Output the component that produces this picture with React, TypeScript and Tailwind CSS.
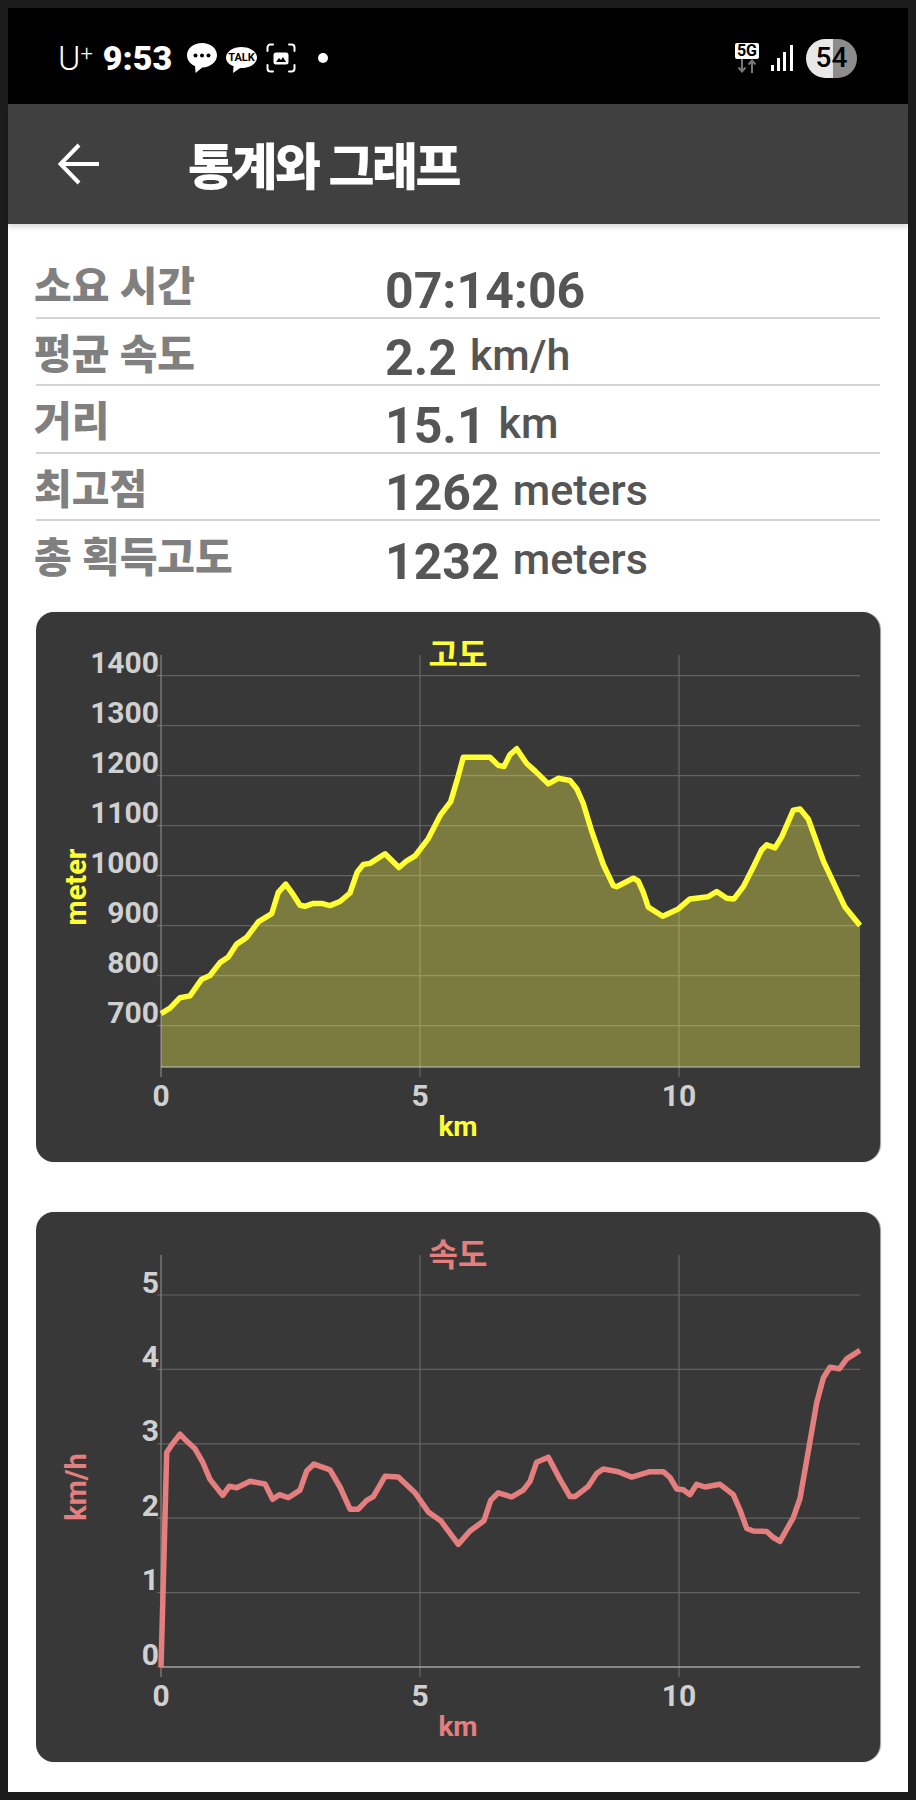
const toPage = (pts: number[][], ox: number, oy: number, sy: number) =>
  pts.map(([x, y]) => [ox + x / 3, oy + y / sy])

// traced from the track, page px
const elevationLine = [
  ...toPage(
    [[423,1118],[450,1103],[480,1075],[510,1070],[545,1025],[570,1015],[600,980],[625,965],[650,930],[680,912],[715,870],[755,848],[775,790],[797,768],[815,790],[840,825],[855,828],[880,820],[905,820],[930,826],[960,815],[990,792],[1012,735],[1030,715],[1050,712],[1095,686],[1137,723],[1160,705],[1185,692],[1225,645],[1262,580],[1292,545],[1312,485],[1330,425]],
    20, 600, 2.703,
  ),
  ...toPage(
    [[10,425],[90,425],[115,447],[132,450],[150,418],[170,402],[200,442],[225,462],[265,497],[295,482],[330,488],[350,510],[370,550],[395,625],[430,715],[460,772],[470,775],[520,752],[535,760],[550,790],[565,830],[608,855],[655,835],[690,808],[745,802],[770,788],[800,806],[822,808],[850,775],[880,722],[905,675],[920,662],[945,670],[965,640],[1000,568],[1020,565],[1045,592],[1090,705],[1155,830],[1200,880]],
    460, 600, 2.703,
  ),
].map(([x, y]) => [x - 36, y - 612])

const speedLine = [
  ...toPage(
    [[423,1221],[430,1000],[436,800],[440,660],[455,640],[480,612],[500,630],[525,650],[548,685],[570,730],[608,772],[628,748],[650,752],[690,735],[735,742],[758,782],[778,770],[805,778],[840,758],[860,708],[882,690],[930,705],[960,750],[990,808],[1015,808],[1040,785],[1060,775],[1095,722],[1135,724],[1185,765],[1225,815],[1262,838],[1315,900]],
    20, 1200, 2.613,
  ),
  ...toPage(
    [[30,865],[72,838],[92,785],[115,765],[155,776],[190,758],[210,735],[230,685],[265,672],[300,730],[330,775],[345,775],[385,748],[410,715],[430,703],[475,710],[515,724],[570,710],[610,710],[630,725],[650,755],[670,757],[690,770],[710,743],[735,750],[780,743],[820,770],[840,810],[860,858],[880,865],[920,866],[940,882],[960,892],[1000,830],[1020,780],[1040,680],[1070,530],[1090,465],[1110,437],[1138,441],[1160,415],[1200,393]],
    460, 1200, 2.613,
  ),
].map(([x, y]) => [x - 36, y - 1212])

const stats = [
  { label: '소요 시간', value: '07:14:06' },
  { label: '평균 속도', value: '2.2', unit: 'km/h' },
  { label: '거리', value: '15.1', unit: 'km' },
  { label: '최고점', value: '1262', unit: 'meters' },
  { label: '총 획득고도', value: '1232', unit: 'meters' },
]

const LEFT = 125
const RIGHT = 824
const TOP = 43
const BOTTOM = 455

interface ChartProps {
  title: string
  yTitle: string
  color: string
  line: number[][]
  yTicks: { label: string; y: number }[]
  area?: boolean
  className?: string
}

function Chart({ title, yTitle, color, line, yTicks, area, className }: ChartProps) {
  const pts = line.map(([x, y]) => `${x.toFixed(1)},${y.toFixed(1)}`).join(' ')
  return (
    <div className={`rounded-[18px] bg-[#383838] shadow-[1px_0_1px_#9a9a9a] ${className ?? ''}`}>
      <svg width="844" height="550" className="block">
        {yTicks.map((t) => (
          <line key={t.label} x1={LEFT - 4} x2={RIGHT} y1={t.y} y2={t.y} stroke="#626262" strokeWidth="1.2" />
        ))}
        {[384, 643].map((x) => (
          <line key={x} x1={x} x2={x} y1={TOP} y2={BOTTOM + 10} stroke="#686868" strokeWidth="1.2" />
        ))}
        <line x1={LEFT} x2={LEFT} y1={TOP} y2={BOTTOM + 10} stroke="#888888" strokeWidth="1.2" />
        {area && (
          <polygon points={`${LEFT},${BOTTOM} ${pts} ${RIGHT},${BOTTOM}`} fill="#ffff50" fillOpacity="0.34" />
        )}
        <line x1={LEFT} x2={RIGHT} y1={BOTTOM} y2={BOTTOM} stroke="#c4c4c4" strokeWidth="1.2" />
        <polyline points={pts} fill="none" stroke={color} strokeWidth="5.5" strokeLinejoin="round" />

        {yTicks.map((t) => (
          <text key={t.label} x={LEFT - 2} y={t.y - 2.5} textAnchor="end" fontSize="30" fontWeight="700" fill="#d0d0d0">
            {t.label}
          </text>
        ))}
        {[
          { label: '0', x: LEFT },
          { label: '5', x: 384 },
          { label: '10', x: 643 },
        ].map((t) => (
          <text key={t.label} x={t.x} y="494" textAnchor="middle" fontSize="30" fontWeight="700" fill="#d0d0d0">
            {t.label}
          </text>
        ))}
        <text x="422" y="54" textAnchor="middle" fontSize="32" fontWeight="700" fill={color}>
          {title}
        </text>
        <text x="422" y="524" textAnchor="middle" fontSize="28" fontWeight="700" fill={color}>
          km
        </text>
        <text
          transform="translate(50 275) rotate(-90)"
          textAnchor="middle"
          fontSize="29"
          fontWeight="700"
          fill={color}
        >
          {yTitle}
        </text>
      </svg>
    </div>
  )
}

function StatusIcons() {
  return (
    <div className="flex items-center">
      <svg width="30" height="30" viewBox="0 0 30 30" className="ml-[15px]">
        <path d="M15 0C6.7 0 0 5.4 0 12.2c0 4.8 3.3 8.9 8 10.9L8.6 30l6.6-5.6C23.4 24.3 30 19 30 12.2 30 5.4 23.3 0 15 0z" fill="#fff" />
        <circle cx="8.5" cy="12.5" r="2" fill="#000" />
        <circle cx="15" cy="12.5" r="2" fill="#000" />
        <circle cx="21.5" cy="12.5" r="2" fill="#000" />
      </svg>
      <svg width="31" height="26" viewBox="0 0 31 26" className="ml-[9px] mt-[3px]">
        <path d="M15.5 0C7 0 0 4.8 0 10.5 0 14.4 3 17.6 7.6 19.3L7 26l7.2-5H15.5C24 21 31 16.200 31 10.5 31 4.800 24 0 15.500 0z" fill="#fff" />
        <text x="15.500" y="14" textAnchor="middle" fontSize="11" fontWeight="700" fill="#000">
          TALK
        </text>
      </svg>
      <svg width="30" height="30" viewBox="0 0 30 30" fill="none" className="ml-[9px]">
        <path d="M7 1.500H4.500a3 3 0 0 0-3 3V8M23 1.500h2.500a3 3 0 0 1 3 3V8M7 28.500H4.500a3 3 0 0 1-3-3V22M23 28.500h2.500a3 3 0 0 0 3-3V22" stroke="#fff" strokeWidth="2" strokeLinecap="round" />
        <rect x="7.500" y="9.500" width="15" height="12" rx="2.500" fill="#fff" />
        <path d="M10 19l3-4 2 2 2-3 3 5z" fill="#000" />
      </svg>
      <div className="ml-[22px] h-[10px] w-[10px] rounded-full bg-white" />
    </div>
  )
}

export default function App() {
  return (
    <div className="h-[1800px] w-[916px] bg-[#1c1c1c] p-2 font-['Roboto','Noto_Sans_CJK_KR',sans-serif]">
      <div className="flex h-[1784px] flex-col bg-white">
        <div className="flex h-[96px] items-center justify-between bg-black pt-[4px] pl-[50px] pr-[51px]">
          <div className="flex items-center text-white">
            <span className="text-[34px] leading-none font-light">
              U<span className="align-[9px] text-[22px]">+</span>
            </span>
            <span className="ml-[10px] text-[34px] leading-none font-black">9:53</span>
            <StatusIcons />
          </div>
          <div className="flex items-center">
            <div className="flex flex-col items-center">
              <div className="rounded-[2px] bg-white px-[2px] text-[16px] leading-[16px] font-bold text-black">5G</div>
              <svg width="20" height="14" viewBox="0 0 20 14" fill="none" stroke="#777" strokeWidth="2">
                <path d="M5 0v12M1.500 8.500L5 12.500l3.500-4M15 14V2M11.500 5.500L15 1.500l3.500 4" />
              </svg>
            </div>
            <svg width="22" height="26" viewBox="0 0 22 26" fill="#fff" className="ml-[12px]">
              <rect x="0" y="20" width="3" height="6" />
              <rect x="6" y="13" width="3" height="13" />
              <rect x="12" y="7" width="3" height="19" />
              <rect x="19" y="0" width="3" height="26" />
            </svg>
            <div className="relative ml-[13px] flex h-[39px] w-[51px] items-center justify-center overflow-hidden rounded-full bg-[linear-gradient(90deg,#e8e8e8_53%,#8c8c8c_53%)] text-[28px] font-medium text-black">
              54
            </div>
          </div>
        </div>

        <div className="flex h-[120px] items-center bg-[#404040] pl-[50px] shadow-[0_3px_5px_rgba(0,0,0,0.15)]">
          <svg width="42" height="42" viewBox="0 0 42 42" fill="none" stroke="#fff" strokeWidth="4">
            <path d="M41 21H3M21 2L2.500 21 21 40" />
          </svg>
          <span className="ml-[88px] pt-[7px] text-[50px] leading-none font-black tracking-[-2.5px] text-white">통계와 그래프</span>
        </div>

        <div className="flex flex-col px-7 pt-[27px]">
          <div>
            {stats.map((s, i) => (
              <div
                key={s.label}
                className={`flex h-[67.500px] items-center ${i < stats.length - 1 ? 'border-b-2 border-[#d4d4d4]' : ''}`}
              >
                <span className="-ml-[2px] w-[351px] pt-[8px] text-[41px] leading-none font-black text-[#808080]">{s.label}</span>
                <span className="pt-[14px] text-[50px] leading-none font-bold text-[#555555]">
                  {s.value}
                  {s.unit && <span className="ml-[13px] align-[5px] text-[43px] font-medium">{s.unit}</span>}
                </span>
              </div>
            ))}
          </div>
          <Chart
            className="mt-[23px]"
            title="고도"
            yTitle="meter"
            color="#ffff33"
            line={elevationLine}
            area
            yTicks={['1400', '1300', '1200', '1100', '1000', '900', '800', '700'].map((label, i) => ({
              label,
              y: 63.7 + i * 50,
            }))}
          />
          <Chart
            className="mt-[50px]"
            title="속도"
            yTitle="km/h"
            color="#e57e7e"
            line={speedLine}
            yTicks={['5', '4', '3', '2', '1', '0'].map((label, i) => ({ label, y: 83 + i * 74.4 }))}
          />
        </div>
      </div>
    </div>
  )
}
